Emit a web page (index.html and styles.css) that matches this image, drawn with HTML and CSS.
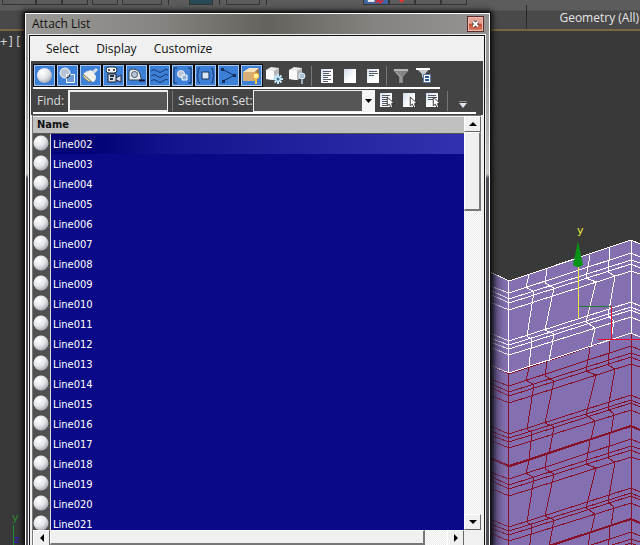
FILE: index.html
```html
<!DOCTYPE html>
<html lang="en">
<head>
<meta charset="utf-8">
<title>Attach List</title>
<link rel="stylesheet" href="styles.css">
</head>
<body>
<svg class="defs" aria-hidden="true">
  <defs>
    <radialGradient id="ball" cx="35%" cy="30%" r="75%"><stop offset="0" stop-color="#fff"/><stop offset=".55" stop-color="#e4e6ea"/><stop offset="1" stop-color="#a4a8b0"/></radialGradient>
    <linearGradient id="shade"><stop offset="0" stop-color="#1c1a2c" stop-opacity=".85"/><stop offset="1" stop-color="#8470b0" stop-opacity="0"/></linearGradient>
    <linearGradient id="paper" x2="1" y2="1"><stop offset="0" stop-color="#cfdcec"/><stop offset=".6" stop-color="#fff"/></linearGradient>
    <symbol id="sphere" viewBox="0 0 16 16"><circle cx="8" cy="8" r="7.500" fill="url(#ball)"/></symbol>
    <symbol id="lines" viewBox="0 0 14 16"><path d="M1 1h12v14H1z" fill="url(#paper)"/><path d="M3 3.500h8M3 5.500h6M3 7.500h8M3 9.500h5M3 11.500h8M3 13.500h5" stroke="#555a66"/></symbol>
    <symbol id="blank" viewBox="0 0 14 16"><path d="M1 1h12v14H1z" fill="url(#paper)"/></symbol>
    <symbol id="half" viewBox="0 0 14 16"><path d="M1 1h12v14H1z" fill="url(#paper)"/><path d="M3 3.500h8M3 5.500h9M3 7.500h5" stroke="#555a66"/></symbol>
    <symbol id="pointer" viewBox="0 0 8 12"><path d="M1 1v8l2-1.500L4.500 11 6 10.500 5 7h2.500z" fill="#fff" stroke="#222" stroke-width=".8"/></symbol>
    <symbol id="cube" viewBox="0 0 16 16"><path d="M1 4l5-3 8 1v9l-5 3-8-1z" fill="#e8e8e6"/><path d="M1 4l8 1v9l-8-1z" fill="#fafafa"/><path d="M9 5l5-3v9l-5 3z" fill="#b4b6b8"/></symbol>
    <path id="mesh" d="M490 272L509 281L631 240L640 244M490 286L509 293L631 253L640 257M490 290L509 299L631 260L640 263M490 294L509 303L631 264L640 268M490 302L509 310L631 271L640 274M490 333L509 341L631 302L640 306M490 338L509 345L631 307L640 311M490 342L509 349L631 310L640 314M490 347L509 355L631 317L640 321M508.500 281V373M631.500 240V333M529 275L526 287L534 292L527 336L532 340L529 366M547 269L545 283L554 288L545 330L554 334L549 361M590 255L586 278L596 282L586 322L595 328L591 347M610 248L608 272L615 276L608 316L614 321L611 340"/>
  </defs>
</svg>

<div class="app">
  <header class="ribbon">
    <div class="tools">
      <span class="tool wide"></span><span class="tool"></span><span class="tool"></span><span class="tool gap"></span><span class="tool field gap"></span><span class="rule"></span>
      <span class="tool lit"></span><span class="rule"></span><span class="tool wide"></span><span class="rule"></span>
      <span class="tool blue"><svg viewBox="0 0 25 4"><path d="M4 0h7v2H4z" fill="#eee"/><path d="M12 3l3-3 2 3 3-3" stroke="#d32a36" fill="none" stroke-width="2"/></svg></span><span class="tool"><svg viewBox="0 0 25 4"><path d="M9 0h6l-3 3z" fill="#e33"/></svg></span><span class="tool"></span><span class="tool"></span>
    </div>
    <div class="panel">Geometry (All)</div>
  </header>

  <main class="viewport">
    <div class="side">
      <span class="vlabel">+][</span>
      <svg class="axis" viewBox="0 0 24 34" aria-label="World axis"><text x="12" y="10" fill="#278b35">y</text><path d="M13.500 14v20" stroke="#1c8d2c"/><text x="14" y="32" fill="#2020bd">z</text></svg>
    </div>
    <svg class="scene" viewBox="490 31 150 514" aria-label="Wireframe model">
      <path d="M490 272L509 281L631 240L640 244V545H490z" fill="#8470b0"/>
      <g fill="none" shape-rendering="crispEdges">
        <g stroke="#870f28"><use href="#mesh" y="93"/><use href="#mesh" y="186"/><use href="#mesh" y="279"/></g>
        <path d="M490 458L509 466L631 426L640 430M490 551L509 559L631 519L640 523" stroke="#870f28" stroke-width="2"/>
        <use href="#mesh" stroke="#fff"/>
        <path d="M490 365L509 373L631 333L640 337" stroke="#fff"/>
      </g>
      <path d="M578 306h33v1h-33z" fill="#217b35"/>
      <path d="M611 306h1v34h-1zM598 339h42v1h-42z" fill="#e01030"/>
      <path d="M578 264h1v54h-1z" fill="#f1e24b"/>
      <path d="M578 241l-5 24q5 4 10 0z" fill="#079315"/>
      <text x="577" y="234" fill="#f2ec3d">y</text>
      <path d="M490 272L509 281V545H490z" fill="url(#shade)"/>
    </svg>
  </main>

  <section class="dialog" aria-label="Attach List">
    <div class="title"><h1>Attach List</h1>
      <button class="close" aria-label="Close"><svg viewBox="0 0 9 8"><path d="M2 1.500l5 5M7 1.500l-5 5" stroke="#403030" stroke-width="3.500"/><path d="M2 1.500l5 5M7 1.500l-5 5" stroke="#fff" stroke-width="2"/></svg></button>
    </div>
    <div class="content">
      <nav class="menu"><button>Select</button><button>Display</button><button>Customize</button></nav>
      <div class="bars">
        <div class="bar filters">
          <button class="on" aria-label="Geometry"><svg viewBox="0 0 19 19"><circle cx="9.500" cy="9.500" r="7.500" fill="url(#ball)"/></svg></button>
          <button class="on" aria-label="Shapes"><svg viewBox="0 0 19 19"><circle cx="7" cy="7" r="5" fill="#b9c4d2" stroke="#f2f6fa"/><path d="M8.500 8.500h8v8h-8z" fill="#8daed5" fill-opacity=".6" stroke="#fff"/><path d="M8 12q4 0 4-4" fill="none" stroke="#234"/></svg></button>
          <button class="on" aria-label="Lights"><svg viewBox="0 0 19 19"><path d="M15 2l2 2-4 4-3-2z" fill="#d4dce4"/><path d="M10 4l5 6q0 6-4 6L2 8q3-3 8-4z" fill="#f2f2ec"/><path d="M2 8l9 8q-3 1-7-3-3-3-2-5z" fill="#f2dfa0" stroke="#677"/></svg></button>
          <button class="on" aria-label="Cameras"><svg viewBox="0 0 19 19"><rect x="2" y="1" width="11" height="6" rx="3" fill="#f3f5f6" stroke="#234"/><circle cx="5" cy="4" r="1" fill="#222"/><circle cx="10" cy="4" r="1" fill="#222"/><path d="M4 8h8v8H4zM12 12l5-3v7l-5-2" fill="#d4dce8" stroke="#223"/><path d="M6 10h4M6 13h3" stroke="#234" stroke-width="2"/></svg></button>
          <button class="on" aria-label="Helpers"><svg viewBox="0 0 19 19"><path d="M2 13V6q0-3 4-3 7 0 8 9v2H2z" fill="#e6ebf0" stroke="#345"/><circle cx="7.500" cy="8.500" r="3" fill="#bac8d9" stroke="#456"/><path d="M12 14.500h6" stroke="#113" stroke-width="2"/></svg></button>
          <button class="on" aria-label="Space warps"><svg viewBox="0 0 19 19"><path d="M1 5q3-3 6 0t6 0 5-1M1 10q3-3 6 0t6 0 5-1M1 15q3-3 6 0t6 0 5-1" fill="none" stroke="#14396d"/></svg></button>
          <button class="on" aria-label="Groups"><svg viewBox="0 0 19 19"><path d="M4 2H1v15h3M15 2h3v15h-3" fill="none" stroke="#14305e"/><circle cx="8" cy="8" r="3.500" fill="#b9c4d2" stroke="#eef"/><path d="M9 9h5v5H9z" fill="#8daed5" stroke="#fff"/></svg></button>
          <button class="on" aria-label="Object references"><svg viewBox="0 0 19 19"><path d="M4 2q-2 0-2 3v3l-1 1.500 1 1.500v3q0 3 2 3M15 2q2 0 2 3v3l1 1.500-1 1.500v3q0 3-2 3" fill="none" stroke="#14305e"/><path d="M6 6h7v7H6z" fill="#dce6f3" stroke="#14305e"/></svg></button>
          <button class="on" aria-label="Bones"><svg viewBox="0 0 19 19"><path d="M3 3l12 6.500L4 15" fill="none" stroke="#14305e"/><path d="M2 2h3v3H2zM14 8h3v3h-3zM3 14h3v3H3z" fill="#14305e"/></svg></button>
          <button class="on" aria-label="Containers"><svg viewBox="0 0 19 19"><path d="M1 6l6-4h10l-4 4z" fill="#fae4b8"/><path d="M1 6h12v9H1z" fill="#d7ad78"/><path d="M13 6l4-4v9l-4 4z" fill="#9d7b52"/><circle cx="14" cy="10" r="3" fill="#fff2a0" stroke="#eda52d"/><path d="M14 13v5" stroke="#ffc239" stroke-width="2"/></svg></button>
          <button aria-label="Frozen objects"><svg viewBox="0 0 19 19"><use href="#cube" width="16" height="16"/><path d="M13 8v10M8 13h10M9.500 9.500l7 7M16.500 9.500l-7 7" stroke="#c5e8ff" stroke-width="2"/><circle cx="13" cy="13" r="1.500" fill="#49718e"/></svg></button>
          <button aria-label="Hidden objects"><svg viewBox="0 0 19 19"><use href="#cube" width="16" height="16"/><circle cx="14" cy="10" r="3" fill="#adc1d5" stroke="#dcecf9"/><path d="M14 13v5" stroke="#95afc6" stroke-width="2"/></svg></button>
          <span class="sep"></span>
          <button aria-label="Select all"><svg viewBox="0 0 19 19"><use href="#lines" x="3" y="2" width="14" height="16"/></svg></button>
          <button aria-label="Select none"><svg viewBox="0 0 19 19"><use href="#blank" x="3" y="2" width="14" height="16"/></svg></button>
          <button aria-label="Invert selection"><svg viewBox="0 0 19 19"><use href="#half" x="3" y="2" width="14" height="16"/></svg></button>
          <span class="sep"></span>
          <button aria-label="Filter"><svg viewBox="0 0 19 19"><path d="M1 4h16l-6 7v6H7v-6z" fill="#858585"/><path d="M2 4h14" stroke="#b5b5b5" stroke-width="2"/><path d="M4 6l5 5v5" fill="none" stroke="#aaa"/></svg></button>
          <button aria-label="Configure filter"><svg viewBox="0 0 19 19"><path d="M1 2h14l-5 6v5L7 11V8z" fill="#c5cbd0"/><path d="M1 3h14" stroke="#fff" stroke-width="2"/><path d="M8.500 8.500h7v8h-7z" fill="#fff" stroke="#5e7ca4"/><path d="M10 11h4M10 14h4" stroke="#285792" stroke-width="2"/></svg></button>
        </div>
        <div class="bar finder">
          <label for="find">Find:</label><input id="find" type="text">
          <span class="sep"></span>
          <label for="set">Selection Set:</label>
          <div class="combo"><select id="set"><option></option></select><svg viewBox="0 0 7 4"><path d="M0 0h7L3.500 4z"/></svg></div>
          <button aria-label="Select listed"><svg viewBox="0 0 19 19"><use href="#lines" x="2" y="1" width="14" height="16"/><use href="#pointer" x="9" y="5" width="9" height="13"/></svg></button>
          <button aria-label="Select subtree"><svg viewBox="0 0 19 19"><use href="#blank" x="2" y="1" width="14" height="16"/><use href="#pointer" x="9" y="5" width="9" height="13"/></svg></button>
          <button aria-label="Select dependents"><svg viewBox="0 0 19 19"><use href="#half" x="2" y="1" width="14" height="16"/><use href="#pointer" x="9" y="5" width="9" height="13"/></svg></button>
          <span class="sep"></span>
          <button aria-label="More"><svg viewBox="0 0 19 19"><path d="M4 10.500h8" stroke="#8a8a8a"/><path d="M4 12h8l-4 5z" fill="#dce3ea"/></svg></button>
        </div>
      </div>

      <div class="list">
        <div class="rows">
          <table>
            <thead><tr><th colspan="2">Name</th></tr></thead>
            <tbody>
              <tr><td><svg><use href="#sphere"/></svg></td><td>Line002</td></tr>
              <tr><td><svg><use href="#sphere"/></svg></td><td>Line003</td></tr>
              <tr><td><svg><use href="#sphere"/></svg></td><td>Line004</td></tr>
              <tr><td><svg><use href="#sphere"/></svg></td><td>Line005</td></tr>
              <tr><td><svg><use href="#sphere"/></svg></td><td>Line006</td></tr>
              <tr><td><svg><use href="#sphere"/></svg></td><td>Line007</td></tr>
              <tr><td><svg><use href="#sphere"/></svg></td><td>Line008</td></tr>
              <tr><td><svg><use href="#sphere"/></svg></td><td>Line009</td></tr>
              <tr><td><svg><use href="#sphere"/></svg></td><td>Line010</td></tr>
              <tr><td><svg><use href="#sphere"/></svg></td><td>Line011</td></tr>
              <tr><td><svg><use href="#sphere"/></svg></td><td>Line012</td></tr>
              <tr><td><svg><use href="#sphere"/></svg></td><td>Line013</td></tr>
              <tr><td><svg><use href="#sphere"/></svg></td><td>Line014</td></tr>
              <tr><td><svg><use href="#sphere"/></svg></td><td>Line015</td></tr>
              <tr><td><svg><use href="#sphere"/></svg></td><td>Line016</td></tr>
              <tr><td><svg><use href="#sphere"/></svg></td><td>Line017</td></tr>
              <tr><td><svg><use href="#sphere"/></svg></td><td>Line018</td></tr>
              <tr><td><svg><use href="#sphere"/></svg></td><td>Line019</td></tr>
              <tr><td><svg><use href="#sphere"/></svg></td><td>Line020</td></tr>
              <tr><td><svg><use href="#sphere"/></svg></td><td>Line021</td></tr>
            </tbody>
          </table>
        </div>
        <div class="scroll vertical">
          <button aria-label="Scroll up"><svg viewBox="0 0 8 8"><path d="M0 6h8L4 2z"/></svg></button>
          <div class="thumb"></div>
          <button class="end" aria-label="Scroll down"><svg viewBox="0 0 8 8"><path d="M0 2h8L4 6z"/></svg></button>
        </div>
        <div class="scroll horizontal">
          <button aria-label="Scroll left"><svg viewBox="0 0 8 8"><path d="M6 0v8L2 4z"/></svg></button>
          <div class="thumb"></div>
          <button class="end" aria-label="Scroll right"><svg viewBox="0 0 8 8"><path d="M2 0v8l4-4z"/></svg></button>
        </div>
      </div>
    </div>
  </section>
</div>
</body>
</html>
```
FILE: styles.css
```css
* { box-sizing: border-box; }
body { margin: 0; font: 12px/16px "Open Sans", "Noto Sans", sans-serif; color: #111; }
button { padding: 0; border: 0; background: none; color: inherit; font: inherit; }
svg { display: block; }
.defs { position: absolute; width: 0; height: 0; }

.app { position: relative; height: 100vh; overflow: hidden; display: flex; flex-direction: column; background: #393939; }
.ribbon { flex: none; height: 31px; display: flex; flex-direction: column; background: linear-gradient(#5c5c5c 10px, #494949 11px); border-bottom: 2px solid #79683f; }
.tools { display: flex; height: 5px; padding-left: 2px; }
.tool { width: 26px; height: 5px; border: 1px solid #353535; border-top: 0; }
.tool.wide { width: 34px; }
.tool.gap { margin-left: 4px; }
.tool.field { width: 40px; }
.tool.lit { width: 24px; margin-left: 14px; background: #294b55; }
.tool.blue { margin-left: 90px; background: #4264a0; }
.rule { width: 1px; height: 5px; margin: 0 6px; background: #333; }
.panel { flex: 1; align-self: flex-end; width: 114px; padding: 5px 1px 0 0; border-left: 1px solid #282828; color: #e6e6e6; text-align: right; }

.viewport { flex: 1; min-height: 0; display: flex; justify-content: space-between; }
.side { width: 24px; display: flex; flex-direction: column; justify-content: space-between; white-space: nowrap; }
.vlabel { padding-top: 3px; color: #d0d0d0; font: 12px/16px "DejaVu Sans Mono", monospace; }
.axis { width: 24px; height: 34px; font: 11px "DejaVu Sans", sans-serif; }
.scene { width: 150px; height: 514px; font: 11px "DejaVu Sans", sans-serif; }

.dialog { position: absolute; left: 25px; right: 150px; top: 13px; bottom: 0; display: flex; flex-direction: column; padding: 0 3px 0 2px; border: 1px solid #fff; border-bottom: 0; background: linear-gradient(#999 60px, #c4c4c4 160px, #50505a 164px); box-shadow: 0 0 0 1px #111, 0 0 6px 2px #000; }
.title { flex: none; display: flex; justify-content: space-between; height: 20px; margin: 0 -3px 0 -2px; padding: 1px 5px 1px 6px; background: linear-gradient(90deg, #9c9a96, #85837f 30%, #65615d 52%, #85827f 75%, #969492); }
h1 { margin: 0; font-size: 12px; line-height: 18px; font-weight: 400; }
.close { width: 17px; height: 16px; margin-top: 1px; display: grid; place-items: center; border: 1px solid #5a2e28; background: linear-gradient(#e8a397 45%, #c54a35 50%, #dc8067); box-shadow: inset 0 0 0 1px #eebcb1; }
.close svg { width: 9px; height: 8px; }
.content { flex: 1; min-height: 0; display: flex; flex-direction: column; padding: 0 1px; border: 1px solid #111; border-bottom: 0; outline: 1px solid #eee; background: #f0f0f0; margin: 1px 1px 0; }
.menu { flex: none; display: flex; gap: 17px; height: 25px; padding-left: 15px; }

.bars { flex: none; height: 54px; padding: 3px 0 0 2px; background: #444; color: #ddd; white-space: nowrap; }
.bar { display: flex; align-items: center; }
.bar button { flex: none; width: 23px; height: 23px; padding: 2px; }
.bar svg { width: 19px; height: 19px; }
.bar .on { padding: 1px; border: 1px solid #0b0b12; background: #3c80d8; box-shadow: inset 0 0 0 1px #a9c6ec; }
.sep { flex: none; width: 1px; height: 20px; margin: 0 3px 0 2px; background: #777; }
.filters { width: 407px; height: 25px; border-bottom: 2px solid #fff; }
.finder { height: 25px; width: 443px; padding-left: 4px; border-bottom: 2px solid #fff; }
#find { width: 100px; height: 22px; margin: 0 1px 0 4px; border: 2px solid #eee; border-right-width: 1px; background: #565656; color: #fff; }
.finder .sep { margin: 0 5px 0 3px; }
.combo { flex: none; display: grid; align-items: center; width: 122px; }
.combo select { grid-area: 1 / 1; appearance: none; width: 100%; height: 22px; border: 1px solid #eee; border-right: 13px solid #f5f5f5; border-radius: 0; background: #565656; }
.bar .combo svg { grid-area: 1 / 1; justify-self: end; width: 7px; height: 4px; margin-right: 3px; pointer-events: none; }

.list { flex: 1; min-height: 0; display: grid; grid-template: minmax(0, 1fr) 15px / minmax(0, 1fr) 17px; margin: 0 2px 0 1px; border-top: 1px solid #777; border-left: 1px solid #777; background: #f0f0f0; }
.rows { overflow: hidden; background: #0a0a88; }
table { width: 100%; border-collapse: separate; border-spacing: 0; color: #fff; font: 11px/14px "DejaVu Sans Condensed", "DejaVu Sans", sans-serif; }
th { height: 18px; padding: 0 4px; border-top: 1px solid #eee; border-bottom: 1px solid #555; background: #c0c0c0; color: #111; text-align: left; font: bold 11px/16px "DejaVu Sans Condensed", "DejaVu Sans", sans-serif; }
td { height: 20px; padding: 2px 0 0 2px; background: #0a0a88; }
td:first-child { width: 18px; padding: 0 1px 2px 0; border-right: 1px solid #ddd; background: #515151; }
td svg { width: 16px; height: 16px; }
tbody tr:first-child td:last-child { background: linear-gradient(90deg, #040478 12%, #14148e 30%, #3232b0); }
.scroll { display: flex; background: repeating-conic-gradient(#fff 0 25%, #e9e9e9 0 50%) 0 0 / 2px 2px; }
.scroll button { flex: none; width: 17px; height: 16px; display: grid; place-items: center; border: 1px solid #fff; border-right-color: #666; border-bottom-color: #666; background: #f0f0f0; }
.scroll button svg { width: 8px; height: 8px; }
.vertical { flex-direction: column; }
.thumb { background: #f0f0f0; border: 1px solid #fff; border-right: 2px solid #777; border-bottom: 2px solid #777; }
.vertical .thumb { height: 79px; }
.horizontal .thumb { width: 87%; }
.scroll .end { margin-top: auto; }
.horizontal .end { margin: 0 0 0 auto; }
```
